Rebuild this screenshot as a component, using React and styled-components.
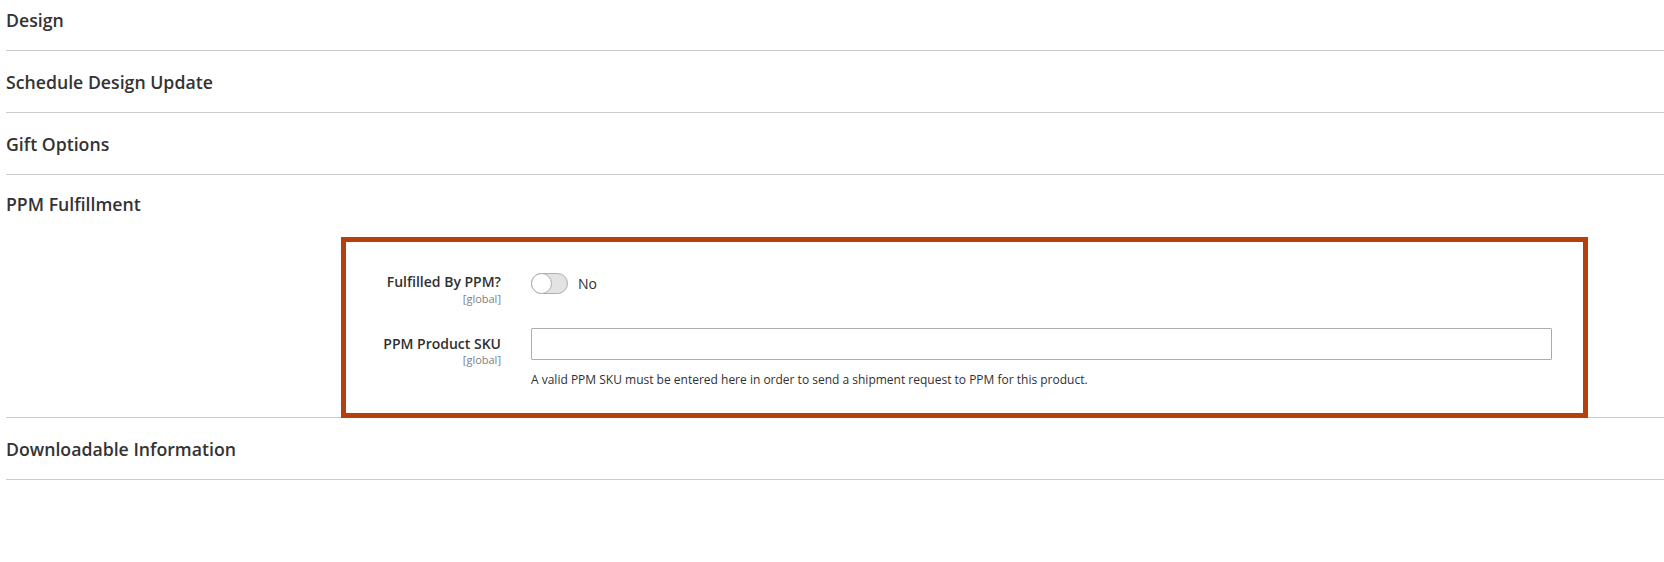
import React, { useState } from 'react';
import styled, { createGlobalStyle } from 'styled-components';

const GlobalStyle = createGlobalStyle`
  html, body {
    margin: 0;
    padding: 0;
    background: #ffffff;
  }
  body {
    font-family: 'Open Sans', 'Noto Sans', sans-serif;
    color: #303030;
  }
`;

const Page = styled.div`
  width: 1664px;
  padding-left: 6px;
  box-sizing: border-box;
`;

const Section = styled.section`
  border-bottom: 1px solid #cccccc;
  padding-bottom: ${props => (props.open ? '0' : '20px')};
`;

const SectionTitle = styled.div`
  font-size: 17.7px;
  font-weight: 600;
  line-height: 20px;
  color: #333333;
  padding-top: ${props => props.top}px;
`;

const Highlight = styled.div`
  margin: 23px 0 -1px 335px;
  width: 1247px;
  border: 5px solid #b5400e;
  box-sizing: border-box;
  padding: 30px 31px 24px 0;
  background: #ffffff;
`;

const Field = styled.div`
  display: grid;
  grid-template-columns: 155px 1fr;
  column-gap: 30px;
  margin-bottom: ${props => props.gap || 0}px;
`;

const LabelCol = styled.div`
  text-align: right;
  padding-top: ${props => props.offset || 0}px;
`;

const Label = styled.div`
  font-size: 14px;
  font-weight: 600;
  line-height: 19.6px;
  color: #303030;
`;

const Scope = styled.div`
  font-size: 11px;
  line-height: 13px;
  color: #808080;
`;

const ToggleRow = styled.label`
  display: flex;
  align-items: center;
  gap: 10px;
  height: 22px;
  font-size: 14px;
  color: #303030;
  cursor: pointer;
`;

const Track = styled.span`
  position: relative;
  display: inline-block;
  width: 37px;
  height: 21px;
  border-radius: 12px;
  background: ${props => (props.on ? '#79a22e' : '#e3e3e3')};
  border: 1px solid ${props => (props.on ? '#79a22e' : '#adadad')};
  box-sizing: border-box;
`;

const Knob = styled.span`
  position: absolute;
  top: -1px;
  left: ${props => (props.on ? '15px' : '-1px')};
  width: 21px;
  height: 21px;
  border-radius: 50%;
  background: #ffffff;
  border: 1px solid #adadad;
  box-sizing: border-box;
`;

const TextInput = styled.input`
  display: block;
  width: 100%;
  height: 32px;
  box-sizing: border-box;
  border: 1px solid #adadad;
  border-radius: 1px;
  padding: 0 10px;
  font-family: 'Open Sans', sans-serif;
  font-size: 14px;
  color: #303030;
  outline: none;
`;

const Note = styled.div`
  margin-top: 11px;
  font-size: 12px;
  line-height: 18px;
  color: #303030;
`;

const closedSections = ['Design', 'Schedule Design Update', 'Gift Options'];

export default function App() {
  const [fulfilled, setFulfilled] = useState(false);
  const [sku, setSku] = useState('');

  return (
    <Page>
      <GlobalStyle />
      {closedSections.map((title, i) => (
        <Section key={title}>
          <SectionTitle top={i === 0 ? 10 : 21}>{title}</SectionTitle>
        </Section>
      ))}

      <Section open>
        <SectionTitle top={19}>PPM Fulfillment</SectionTitle>
        <Highlight>
          <Field gap={23}>
            <LabelCol>
              <Label>Fulfilled By PPM?</Label>
              <Scope>[global]</Scope>
            </LabelCol>
            <ToggleRow onClick={() => setFulfilled(!fulfilled)}>
              <Track on={fulfilled}>
                <Knob on={fulfilled} />
              </Track>
              {fulfilled ? 'Yes' : 'No'}
            </ToggleRow>
          </Field>
          <Field>
            <LabelCol offset={6}>
              <Label>PPM Product SKU</Label>
              <Scope>[global]</Scope>
            </LabelCol>
            <div>
              <TextInput value={sku} onChange={e => setSku(e.target.value)} />
              <Note>
                A valid PPM SKU must be entered here in order to send a shipment request to PPM for this product.
              </Note>
            </div>
          </Field>
        </Highlight>
      </Section>

      <Section>
        <SectionTitle top={21}>Downloadable Information</SectionTitle>
      </Section>
    </Page>
  );
}
